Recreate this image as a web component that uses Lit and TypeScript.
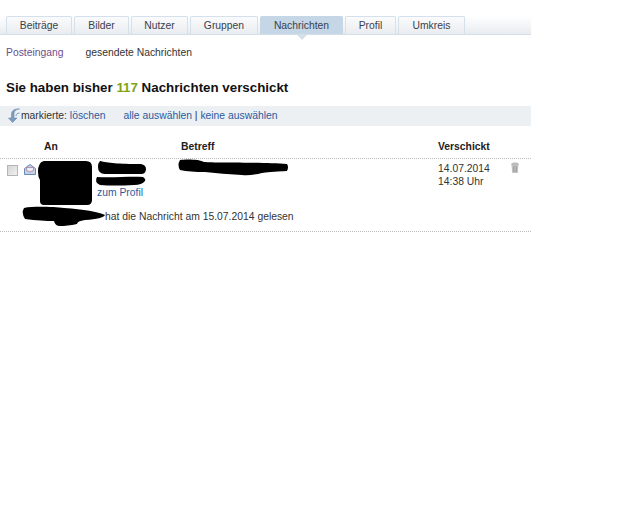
import { LitElement, html, css } from "lit";
import { customElement } from "lit/decorators.js";

const tabs: [string, number, boolean][] = [
  ["Beiträge", 66, false],
  ["Bilder", 55, false],
  ["Nutzer", 57, false],
  ["Gruppen", 68, false],
  ["Nachrichten", 83, true],
  ["Profil", 51, false],
  ["Umkreis", 67, false],
];

@customElement("app-root")
export class AppRoot extends LitElement {
  static styles = css`
    :host { display: block; width: 640px; height: 512px; background: #fff; overflow: hidden;
      font-family: "Liberation Sans", Arial, sans-serif; font-size: 10.35px; color: #333; position: relative; }
    .page { width: 531px; padding-top: 16px; }
    .tabs { display: flex; gap: 2px; height: 19px; box-sizing: border-box; padding-left: 6px;
      border-bottom: 1px solid #d5dfe9; background: linear-gradient(#fff, #e9ecef); }
    .tab { box-sizing: border-box; height: 18px; text-align: center; line-height: 17px; color: #3a3f4a;
      background: linear-gradient(#fbfbfc, #e9ecf0); border: 1px solid #d4e0ec; border-bottom: none;
      border-radius: 2px 2px 0 0; position: relative; }
    .tab.on { background: #c5d6e7; border-color: #c5d6e7; }
    .tab.on::after { content: ""; position: absolute; left: 50%; margin-left: -5px; top: 18px;
      border: 5px solid transparent; border-top-color: #d5dfe9; border-bottom: none; }
    .sub { display: flex; gap: 22px; padding: 11px 0 0 6px; line-height: 13px; }
    .sub .in { color: #6b4f92; }
    .sub .out { color: #333; }
    h1 { margin: 21px 0 0 6px; font-size: 13.33px; line-height: 16px; font-weight: bold; color: #111; }
    h1 b { color: #7fa314; }
    .bar { margin-top: 10px; height: 20px; background: #ecf0f3; display: flex; align-items: center;
      padding-left: 8px; line-height: 20px; }
    .bar svg { margin: -2px 1px 0 0; flex: none; }
    a { color: #2b5a9e; text-decoration: none; }
    .sep { margin-left: 18px; }
    .head { display: grid; grid-template-columns: 175px 257px 1fr; margin-top: 11px; height: 22px; box-sizing: border-box;
      padding-left: 6px; border-bottom: 1px dotted #bbb; font-weight: bold; color: #222; line-height: 20px; }
    .head span:first-child { padding-left: 38px; }
    .row { position: relative; display: grid; grid-template-columns: 175px 257px 1fr; height: 73px; box-sizing: border-box;
      padding-left: 6px; border-bottom: 1px dotted #bbb; }
    .cellA { display: flex; padding-top: 3px; gap: 5px; align-items: flex-start; }
    .box { width: 11px; height: 11px; margin: 3px 0 0 1px; box-sizing: border-box; border: 1px solid #b5b5b5;
      background: linear-gradient(135deg, #d4d4d4, #f2f2f2); flex: none; }
    .name { position: absolute; left: 97px; top: 27px; line-height: 13px; }
    .read { position: absolute; left: 105px; top: 51px; line-height: 13px; color: #333; white-space: nowrap; }
    .date { padding-top: 3px; line-height: 13px; display: flex; gap: 21px; }
    .ink { position: absolute; left: 0; top: 0; pointer-events: none; }
  `;

  render() {
    return html`<div class="page">
      <div class="tabs">
        ${tabs.map(([t, w, on]) => html`<div class="tab ${on ? "on" : ""}" style="width:${w}px">${t}</div>`)}
      </div>
      <div class="sub"><span class="in">Posteingang</span><span class="out">gesendete Nachrichten</span></div>
      <h1>Sie haben bisher <b>117</b> Nachrichten verschickt</h1>
      <div class="bar">
        <svg width="12" height="15" viewBox="0 0 12 15"><path d="M11.500 1C8 1 6 3 6 6v4H9L4.500 14.500 .5 10H3.500V6C3.500 2.500 7 .5 11.500 1z" fill="#7c9dc0" stroke="#5c7fa3" stroke-width=".5"/><path d="M11.500 5C9.500 5 8 6 8 8" fill="none" stroke="#7c9dc0"/></svg>
        <span>markierte: <a>löschen</a></span>
        <span class="sep"><a>alle auswählen</a> | <a>keine auswählen</a></span>
      </div>
      <div class="head"><span>An</span><span>Betreff</span><span>Verschickt</span></div>
      <div class="row">
        <div class="cellA">
          <div class="box"></div>
          <svg width="12" height="11" viewBox="0 0 12 11" style="margin:2px 0 0 1px"><path d="M.5 4.500L6 .5l5.500 4v6H.5z" fill="#c3d2e6" stroke="#6a8aba"/><path d="M2.500 3.500h7v3l-3.500 1.500-3.500-1.500z" fill="#e8ecf4" stroke="#b0708a" stroke-width=".7"/></svg>
        </div>
        <div></div>
        <div class="date"><span>14.07.2014<br />14:38 Uhr</span>
          <svg width="10" height="12" viewBox="0 0 10 12" style="margin-left:-1px"><path d="M1 3C1 1 3 .5 5 .5S9 1 9 3z" fill="#bbb"/><path d="M1.500 3h7l-.7 8H2.200z" fill="#c2c2c2"/><path d="M3.500 4v6M5 4v6M6.500 4v6" stroke="#999" stroke-width=".7"/></svg>
        </div>
        <a class="name">zum Profil</a>
        <span class="read">hat die Nachricht am 15.07.2014 gelesen</span>
      </div>
      <svg class="ink" width="640" height="512" viewBox="0 0 640 512">
        <g fill="#000">
          <path d="M44 161h42q6 0 6 6v33q0 5-5 5H44q-4 0-4-4V180q-2-3-2-8 0-10 6-11z"/>
          <path d="M100 161c8 2 18 3 41 3q5 1 5 5 0 5-5 5H105q-7 0-7-7 0-4 2-6z"/>
          <path d="M97 177c16 1 34-1 46 0q3 2 2 4-3 4-11 4-20 1-34 0-6-3-3-8z"/>
          <path d="M180 160c5-1 20-1 24 2 10 1 60 0 83 2q2 3 0 7-20 1-25 2-12 3-20 2-20-1-37-3-15 0-25-2-3-5 0-10z"/>
          <path d="M24 208c10-2 30-1 40 0q30 2 41 7-2 4-20 5-8 1-8 4-10 2-17 2-5 0-6-5-12 0-29-2-4-6-1-11z"/>
        </g>
      </svg>
    </div>`;
  }
}
